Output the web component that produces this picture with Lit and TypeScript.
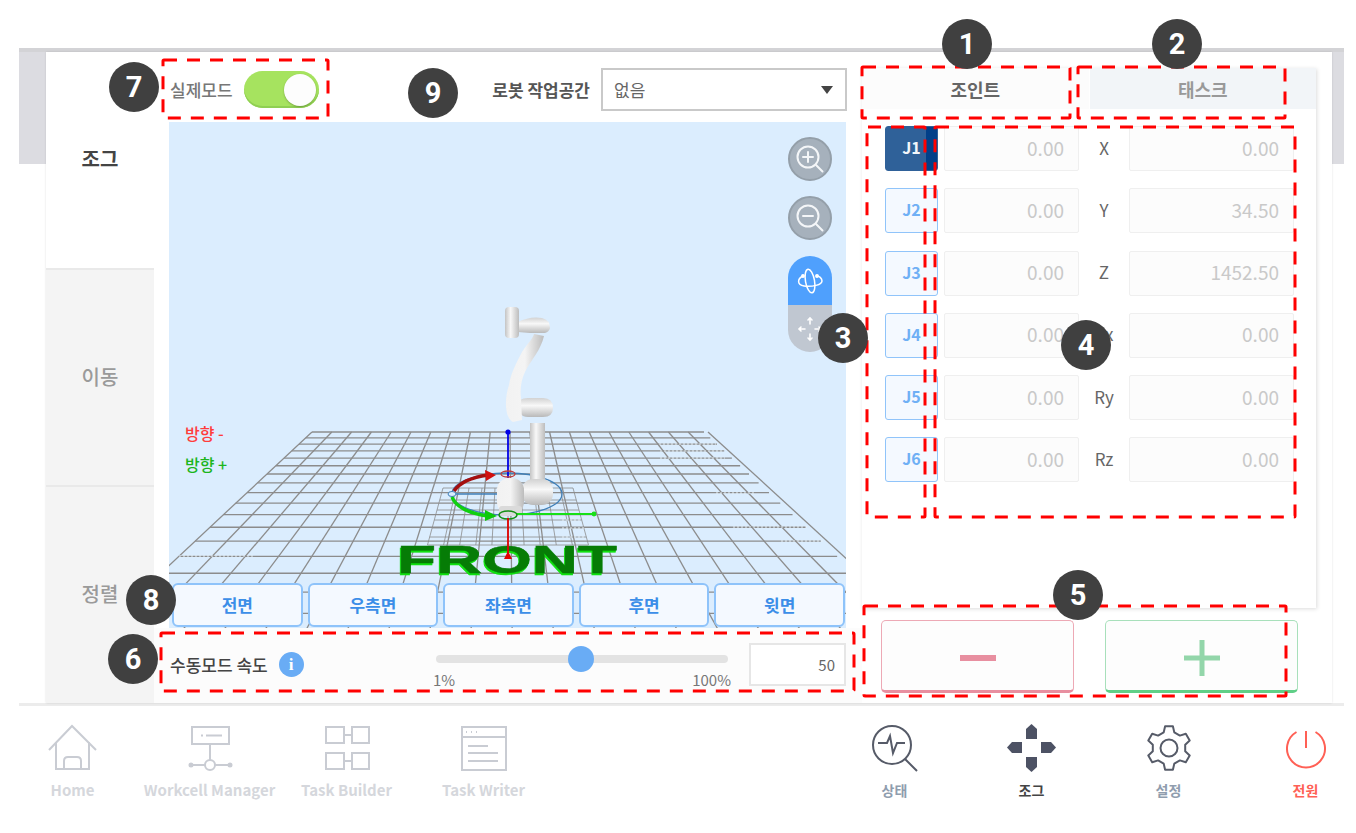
import { LitElement, html, css, svg } from "lit";
import { customElement } from "lit/decorators.js";

const KR = `"Noto Sans CJK KR", "Noto Sans", sans-serif`;

const badges = [
  { n: 1, x: 967, y: 44 }, { n: 2, x: 1177, y: 44 }, { n: 3, x: 843, y: 338 },
  { n: 4, x: 1086, y: 345 }, { n: 5, x: 1078, y: 595 }, { n: 6, x: 133, y: 659 },
  { n: 7, x: 134, y: 87 }, { n: 8, x: 151, y: 600 }, { n: 9, x: 433, y: 93 },
];
const boxes = [
  [163, 60, 165, 58], [862, 67, 208, 51], [1078, 67, 207, 51], [867, 127, 58, 390],
  [935, 127, 360, 390], [864, 606, 422, 90], [161, 633, 693, 58],
];
const joints = [
  { j: "J1", a: "0.00", l: "X", b: "0.00" }, { j: "J2", a: "0.00", l: "Y", b: "34.50" },
  { j: "J3", a: "0.00", l: "Z", b: "1452.50" }, { j: "J4", a: "0.00", l: "Rx", b: "0.00" },
  { j: "J5", a: "0.00", l: "Ry", b: "0.00" }, { j: "J6", a: "0.00", l: "Rz", b: "0.00" },
];
const views = ["전면", "우측면", "좌측면", "후면", "윗면"];

function gridLines() {
  const out: any[] = [];
  const vy = 249;
  const slope = 196 / 183;
  for (let i = 0; i < 19; i++) {
    const y = vy + 1 / (0.005464 - 0.00017 * i);
    const w = (y - vy) * slope;
    out.push(svg`<line x1=${508 - w} y1=${y} x2=${508 + w} y2=${y}></line>`);
  }
  for (let j = 0; j <= 20; j++) {
    const xb = 312 + 19.8 * j;
    const t = (680 - vy) / 183;
    out.push(svg`<line x1=${xb} y1="432" x2=${508 + (xb - 508) * t} y2="680"></line>`);
  }
  return out;
}

function innerLines() {
  const out: any[] = [];
  const vy = 249;
  const at = (x: number, y: number) => 508 + ((x - 508) * (y - vy)) / (488 - vy);
  for (const y of [488, 500, 510, 520, 528, 537, 545]) {
    out.push(svg`<line x1=${at(443, y)} y1=${y} x2=${at(573, y)} y2=${y}></line>`);
  }
  for (let k = 0; k <= 10; k++) {
    const x = 443 + (130 * k) / 10;
    out.push(svg`<line x1=${x} y1="488" x2=${at(x, 545)} y2="545"></line>`);
  }
  return out;
}

function gearPath() {
  const cx = 1168, cy = 748, n = 6;
  const pts: string[] = [];
  for (let i = 0; i < n; i++) {
    const a = (i * Math.PI * 2) / n - Math.PI / 2;
    const s = Math.PI / n;
    const p = (r: number, d: number) =>
      `${(cx + r * Math.cos(a + d)).toFixed(1)} ${(cy + r * Math.sin(a + d)).toFixed(1)}`;
    pts.push(p(16.5, -s * 0.62), p(22, -s * 0.34), p(22, s * 0.34), p(16.5, s * 0.62));
  }
  return "M" + pts.join("L") + "Z";
}

@customElement("app-root")
export class AppRoot extends LitElement {
  static styles = css`
    :host { display: block; font-family: ${css([KR] as any)}; }
    .stage { position: relative; width: 1356px; height: 833px; overflow: hidden; background: #fff; }
    .backdrop { position: absolute; left: 19px; top: 48px; width: 1325px; height: 116px; background: #dcdce1; border-top: 4px solid #d3d3d6; box-sizing: border-box; }
    .main { position: relative; margin: 52px 0 0 46px; width: 1286px; height: 651px; display: flex; background: #fff; box-shadow: 0 0 2px rgba(0,0,0,.12); }
    .side { width: 108px; display: flex; flex-direction: column; flex: none; }
    .tab { flex: 1; display: flex; align-items: center; justify-content: center; padding-bottom: 3px; font-size: 20px; color: #9a9a9a; background: #f4f4f4; border-top: 2px solid #e9e9e9; font-weight: 500; }
    .tab.on { background: #fff; color: #444; font-weight: 700; border-top: 0; }
    .center { width: 708px; flex: none; display: flex; flex-direction: column; }
    .top { height: 70px; box-sizing: border-box; padding: 16px 15px 0 16px; display: flex; justify-content: space-between; align-items: flex-start; }
    .mode { display: flex; align-items: center; gap: 11px; margin-top: 3px; font-size: 17px; font-weight: 500; color: #777; }
    .toggle { width: 75px; height: 37px; border-radius: 19px; background: #a6e35f; display: flex; justify-content: flex-end; align-items: center; padding-right: 3px; box-sizing: border-box; box-shadow: inset 0 -2px 0 #8fcf52; }
    .knob { width: 32px; height: 32px; border-radius: 50%; background: #fdfdfd; box-shadow: 0 1px 2px rgba(0,0,0,.25); }
    .work { display: flex; align-items: center; gap: 11px; font-size: 17px; font-weight: 700; color: #555; }
    .select { width: 246px; height: 43px; box-sizing: border-box; border: 2px solid #c9c9c9; padding: 0 12px 0 11px; display: flex; align-items: center; justify-content: space-between; font-size: 17px; font-weight: 400; color: #666; }
    .tri { width: 0; height: 0; border-left: 6px solid transparent; border-right: 6px solid transparent; border-top: 8px solid #444; }
    .scene { position: relative; margin-left: 15px; width: 677px; height: 506px; background: #dbedfe; overflow: hidden; display: flex; flex-direction: column; justify-content: flex-end; box-sizing: border-box; padding-bottom: 1px; }
    .scene > svg.world { position: absolute; inset: 0; width: 677px; height: 506px; }
    .grid line { stroke: #8c8c8c; stroke-width: 1.3; }
    .inner line { stroke: #8c8c8c; stroke-width: .8; }
    .dots line { stroke: #e8f1f8; stroke-width: 1.2; stroke-dasharray: 2 2; }
    .front { font-family: "Liberation Sans", sans-serif; font-weight: 700; font-size: 38px; fill: #067c06; stroke: #067c06; stroke-width: .5; filter: drop-shadow(-1px 2px 0 #10e010); }
    .dir { position: absolute; left: 16px; font-size: 16px; font-weight: 500; line-height: 20px; }
    .dir.neg { top: 301px; color: #ff3c3c; }
    .dir.pos { top: 332px; color: #1db51d; }
    .tools { position: absolute; left: 619px; top: 15px; width: 44px; display: flex; flex-direction: column; gap: 15px; }
    .round { width: 44px; height: 44px; box-sizing: border-box; border-radius: 50%; background: #a6b1bc; border: 2px solid #949fa9; display: flex; align-items: center; justify-content: center; }
    .pill { width: 44px; height: 96px; border-radius: 22px; overflow: hidden; display: flex; flex-direction: column; margin-top: 1px; }
    .pill div { display: flex; justify-content: center; align-items: center; }
    .pill .a { height: 49px; background: #4fa0fd; }
    .pill .b { height: 47px; background: #c0c7d1; }
    .views { position: relative; display: flex; gap: 5px; padding: 0 1px 0 3px; }
    .views button { flex: 1; height: 44px; margin: 0; padding: 0 0 2px; box-sizing: border-box; border: 2px solid #8ec3fa; border-radius: 6px; background: #f4f9ff; color: #3b8ee8; font: 700 17px ${css([KR] as any)}; }
    .speed { flex: 1; background: #fcfcfc; padding: 0 16px; display: flex; align-items: flex-start; }
    .speed .lbl { margin-top: 24px; font-size: 17px; font-weight: 500; color: #444; display: flex; align-items: center; gap: 11px; }
    .info { width: 25px; height: 25px; border-radius: 50%; background: #69acf5; color: #fff; display: flex; align-items: center; justify-content: center; font: 700 17px "Liberation Serif", serif; }
    .slider { margin-left: auto; margin-top: 27px; width: 298px; }
    .track { position: relative; height: 8px; margin: 0 3px; border-radius: 4px; background: #e3e3e3; }
    .thumb { position: absolute; left: 132px; top: -9px; width: 26px; height: 26px; border-radius: 50%; background: #69acf5; }
    .ends { display: flex; justify-content: space-between; margin-top: 9px; font-size: 15px; color: #777; line-height: 16px; }
    .num { margin: 15px 0 0 18px; width: 97px; height: 43px; box-sizing: border-box; border: 2px solid #e6e6e6; background: #fff; display: flex; align-items: center; justify-content: flex-end; padding-right: 9px; font-size: 15px; color: #666; }
    .right { width: 470px; flex: none; padding-top: 16px; box-sizing: border-box; }
    .panel { width: 454px; height: 540px; box-sizing: border-box; background: #fff; box-shadow: 1px 1px 4px rgba(0,0,0,.14); }
    .ptabs { display: flex; height: 41px; }
    .ptab { flex: 1; display: flex; align-items: center; justify-content: center; font-size: 18px; font-weight: 700; color: #666; background: #fcfcfc; }
    .ptab.off { background: #f2f5f8; color: #999; margin-left: 1px; }
    .rows { padding: 17px 22px 0 23px; display: flex; flex-direction: column; gap: 17.3px; }
    .row { display: grid; grid-template-columns: 53px 141px 50px 1fr; height: 45px; }
    .row .jb { box-sizing: border-box; border: 1.5px solid #90c4fa; border-radius: 3px; background: #f4f9ff; color: #6fb0f5; font-size: 16px; font-weight: 700; display: flex; align-items: center; justify-content: center; padding-bottom: 3px; }
    .row .jb.on { background: linear-gradient(90deg, #2f6199 40px, #023f88 40px); border-color: #2f6199; color: #f2f6fb; }
    .field { box-sizing: border-box; border: 1.5px solid #efefef; border-radius: 2px; background: #fcfcfc; display: flex; align-items: center; justify-content: flex-end; padding: 0 14px 3px 0; font-size: 19px; color: #c9c9c9; }
    .field.a { margin-left: 6px; }
    .row .name { display: flex; align-items: center; justify-content: center; font-size: 17px; color: #666; padding-bottom: 3px; }
    .acts { display: flex; gap: 31px; margin: 12px 0 0 19px; }
    .act { width: 193px; height: 73px; box-sizing: border-box; border-radius: 5px; background: #fdfdfd; display: flex; align-items: center; justify-content: center; padding-top: 4px; }
    .act.m { border: 1.5px solid #eda9b5; border-bottom: 3px solid #e88fa0; }
    .act.p { border: 1.5px solid #a8e0bb; border-bottom: 3px solid #5fcf87; }
    .fline { margin: 0 12px 0 19px; height: 3px; background: #ececec; }
    .foot { height: 127px; display: flex; padding-left: 4px; }
    .fgroup { display: flex; }
    .fgroup.r { margin-left: auto; margin-right: -18px; }
    .item { width: 137px; display: flex; flex-direction: column; align-items: center; padding-top: 17px; box-sizing: border-box; font-size: 15px; font-weight: 700; color: #d5d7dc; white-space: nowrap; }
    .item svg { width: 50px; height: 50px; display: block; margin-bottom: 7px; }
    .item span { line-height: 20px; }
    .item.s { font-size: 14px; color: #8f9dae; }
    .item.dark { color: #444; }
    .item.pw { color: #ff6055; }
    .ic { fill: none; stroke: #c9ccd3; stroke-width: 2; }
    .ic2 { fill: none; stroke: #565b68; stroke-width: 2; }
    .badge { position: absolute; width: 50px; height: 50px; border-radius: 50%; background: #404040; color: #fff; display: flex; align-items: center; justify-content: center; font: 700 29px "Liberation Sans Narrow", Roboto, sans-serif; }
    .marks { position: absolute; inset: 0; width: 1356px; height: 833px; pointer-events: none; }
    .marks rect { fill: none; stroke: #f00; stroke-width: 3; stroke-dasharray: 13 10; }
  `;

  world() {
    return svg`
      <defs>
        <linearGradient id="tube" x1="0" x2="1" y1="0" y2="0">
          <stop offset="0" stop-color="#c4c4c4"/><stop offset=".4" stop-color="#f8f8f8"/><stop offset="1" stop-color="#bdbdbd"/>
        </linearGradient>
        <linearGradient id="cap" x1="0" x2="0" y1="0" y2="1">
          <stop offset="0" stop-color="#d2d2d2"/><stop offset=".4" stop-color="#f8f8f8"/><stop offset="1" stop-color="#b9b9b9"/>
        </linearGradient>
        <linearGradient id="soft" x1="0" x2="1" y1="0" y2="0">
          <stop offset="0" stop-color="#f2f2f2"/><stop offset=".5" stop-color="#f4f4f4"/><stop offset="1" stop-color="#bcbcbc"/>
        </linearGradient>
        <filter id="b"><feGaussianBlur stdDeviation=".6"/></filter>
      </defs>
      <g class="grid">${gridLines()}</g>
      <g class="inner">${innerLines()}</g>
      <g class="dots">
        <line x1="659" y1="444" x2="716" y2="444"></line><line x1="660" y1="451" x2="722" y2="451"></line>
        <line x1="660" y1="458" x2="725" y2="458"></line><line x1="716" y1="493" x2="755" y2="493"></line>
        <line x1="733" y1="527" x2="807" y2="527"></line><line x1="781" y1="541" x2="825" y2="541"></line>
        <line x1="179" y1="556" x2="253" y2="556"></line><line x1="562" y1="520" x2="582" y2="520"></line>
        <line x1="562" y1="528" x2="585" y2="528"></line><line x1="562" y1="537" x2="585" y2="537"></line>
      </g>
      <text class="front" x="397" y="573" textLength="220" lengthAdjust="spacingAndGlyphs">FRONT</text>
      <ellipse cx="507" cy="494" rx="55" ry="21" fill="none" stroke="#3f7fb8" stroke-width="1.3"></ellipse>
      <line x1="452" y1="494" x2="497" y2="494" stroke="#3f7fb8" stroke-width="1.3"></line>
      <ellipse cx="452" cy="494" rx="4" ry="2.500" fill="#dbedfe" stroke="#3f7fb8"></ellipse>
      <line x1="508" y1="433" x2="508" y2="478" stroke="#0000e6" stroke-width="1.8"></line>
      <circle cx="508" cy="432" r="2.600" fill="#0000e6"></circle>
      <ellipse cx="508" cy="474" rx="7" ry="3" fill="none" stroke="#c23a3a" stroke-width="1.300"></ellipse>
      <path d="M454 491 C460 482 474 477 488 475" fill="none" stroke="#a50f0f" stroke-width="3.500"></path>
      <path d="M485 470 L496 475 L486 481Z" fill="#d01010"></path>
      <path d="M452 497 C456 508 472 514 488 516" fill="none" stroke="#10d010" stroke-width="3.500"></path>
      <path d="M485 510 L497 516 L485 521Z" fill="#0cc80c"></path>
      <g filter="url(#b)">
        <rect x="530" y="423" width="15" height="60" fill="url(#tube)"></rect>
        <path d="M518 405 Q518 398 528 398 H543 Q553 398 553 408 Q553 417 543 417 H528 Q518 417 518 405Z" fill="url(#cap)"></path>
        <path d="M534 334 L544 336 C541 350 531 360 525 372 C521 380 520 390 521 398 L522 420 L513 422 C505 418 504 400 509 385 C511 372 517 362 522 352 C527 344 532 340 534 334Z" fill="url(#soft)"></path>
        <path d="M518 322 Q530 316 542 318 Q550 320 550 328 Q549 332 545 333 L530 333 L518 332Z" fill="url(#cap)"></path>
        <rect x="505" y="307" width="14" height="31" rx="4" fill="url(#tube)"></rect>
        <rect x="522" y="479" width="31" height="26" rx="11" fill="url(#cap)"></rect>
        <rect x="497" y="478" width="27" height="36" rx="12" fill="url(#soft)"></rect>
        <rect x="499" y="506" width="23" height="10" rx="3" fill="#dadada"></rect>
      </g>
      <line x1="517" y1="514" x2="593" y2="514" stroke="#18e018" stroke-width="1.800"></line>
      <circle cx="594" cy="514" r="2.400" fill="#18e018"></circle>
      <ellipse cx="508" cy="515" rx="9" ry="4" fill="none" stroke="#149014" stroke-width="1.500"></ellipse>
      <line x1="508" y1="518" x2="508" y2="556" stroke="#e00000" stroke-width="1.800"></line>
      <path d="M504 559 L508 551 L512 559Z" fill="#e00000"></path>
    `;
  }

  render() {
    return html`<div class="stage">
      <div class="backdrop"></div>
      <div class="main">
        <div class="side">
          <div class="tab on">조그</div><div class="tab">이동</div><div class="tab">정렬</div>
        </div>
        <div class="center">
          <div class="top">
            <div class="mode">실제모드<div class="toggle"><div class="knob"></div></div></div>
            <div class="work">로봇 작업공간<div class="select">없음<span class="tri"></span></div></div>
          </div>
          <div class="scene">
            <svg class="world" viewBox="169 122 677 506">${this.world()}</svg>
            <div class="dir neg">방향 -</div><div class="dir pos">방향 +</div>
            <div class="tools">
              <div class="round"><svg width="34" height="34" viewBox="0 0 34 34" fill="none" stroke="#f4f6f8" stroke-width="2" stroke-linecap="round"><circle cx="15" cy="15" r="10.500"/><path d="M23 23l6.500 6.500M10 15h10M15 10v10"/></svg></div>
              <div class="round"><svg width="34" height="34" viewBox="0 0 34 34" fill="none" stroke="#f4f6f8" stroke-width="2" stroke-linecap="round"><circle cx="15" cy="15" r="10.500"/><path d="M23 23l6.500 6.500M10 15h10"/></svg></div>
              <div class="pill">
                <div class="a"><svg width="30" height="30" viewBox="0 0 30 30" fill="none" stroke="#fff" stroke-width="1.500"><ellipse cx="15" cy="15" rx="4.500" ry="12" transform="rotate(-10 15 15)"/><path d="M8 10C2 13 2 19 9 20c8 1 18-1 18-5 0-3-3-5-5-5"/><circle cx="8" cy="10" r="1.200" fill="#fff"/><circle cx="22" cy="10" r="1.200" fill="#fff"/></svg></div>
                <div class="b"><svg width="30" height="30" viewBox="0 0 30 30" fill="none" stroke="#fff" stroke-width="1.600" stroke-linecap="round"><path d="M15 4v6M13 6l2-2 2 2M15 20v6M13 24l2 2 2-2M4 15h6M6 13l-2 2 2 2M20 15h6M24 13l2 2-2 2"/></svg></div>
              </div>
            </div>
            <div class="views">${views.map((v) => html`<button>${v}</button>`)}</div>
          </div>
          <div class="speed">
            <div class="lbl">수동모드 속도<span class="info">i</span></div>
            <div class="slider">
              <div class="track"><div class="thumb"></div></div>
              <div class="ends"><span>1%</span><span>100%</span></div>
            </div>
            <div class="num">50</div>
          </div>
        </div>
        <div class="right">
          <div class="panel">
            <div class="ptabs"><div class="ptab">조인트</div><div class="ptab off">태스크</div></div>
            <div class="rows">
              ${joints.map((r, i) => html`<div class="row">
                <div class="jb ${i === 0 ? "on" : ""}">${r.j}</div>
                <div class="field a">${r.a}</div>
                <div class="name">${r.l}</div>
                <div class="field">${r.b}</div>
              </div>`)}
            </div>
          </div>
          <div class="acts">
            <div class="act m"><svg width="36" height="8" viewBox="0 0 36 8"><rect width="36" height="6" y="1" fill="#e88fa0"/></svg></div>
            <div class="act p"><svg width="36" height="36" viewBox="0 0 36 36"><path d="M15.500 0h5v15.500H36v5H20.500V36h-5V20.500H0v-5h15.500z" fill="#93d6aa"/></svg></div>
          </div>
        </div>
      </div>
      <div class="fline"></div>
      <div class="foot">
        <div class="fgroup">
          <div class="item"><svg viewBox="47 723 50 50" class="ic"><path d="M48 750L71 726L95 750M55 742V769H88V742M63 769V761Q63 757 67 757H76Q80 757 80 761V769"/></svg><span>Home</span></div>
          <div class="item"><svg viewBox="184 723 50 50" class="ic"><rect x="191" y="727" width="37" height="17"/><path d="M200 735.500h2M205 735.500h16M209 744v16M191 765h13M214 765h14"/><circle cx="209" cy="765" r="5"/><circle cx="190" cy="765" r="1.500" fill="#c9ccd3"/><circle cx="229" cy="765" r="1.500" fill="#c9ccd3"/></svg><span>Workcell Manager</span></div>
          <div class="item"><svg viewBox="321 723 50 50" class="ic"><rect x="325" y="727" width="18" height="16"/><rect x="351" y="727" width="17" height="16"/><rect x="325" y="753" width="18" height="16"/><rect x="351" y="753" width="17" height="16"/><path d="M343 735h8M343 761h8"/></svg><span>Task Builder</span></div>
          <div class="item"><svg viewBox="458 723 50 50" class="ic"><rect x="461" y="727" width="44" height="43"/><path d="M461 737h44M467 746h20M467 753h30M467 761h30M465 732h1M470 732h1M475 732h1"/></svg><span>Task Writer</span></div>
        </div>
        <div class="fgroup r">
          <div class="item s"><svg viewBox="870 723 50 50" class="ic2"><circle cx="892" cy="745" r="19"/><path d="M905 759L917 771M878 743h9l3-7 3 17 4-10h8"/></svg><span>상태</span></div>
          <div class="item s dark"><svg viewBox="1007 723 50 50"><g fill="#4d5264"><path d="M1026 739V729l5.500-5 5.500 5v10z"/><path d="M1026 757v10l5.500 5 5.500-5v-10z"/><path d="M1022 742h-10l-5 5.500 5 5.500h10z"/><path d="M1041 742h10l5 5.500-5 5.500h-10z"/></g></svg><span>조그</span></div>
          <div class="item s"><svg viewBox="1143 723 50 50" class="ic2"><path d=${gearPath()} stroke-linejoin="round"/><circle cx="1168" cy="748" r="8.500"/></svg><span>설정</span></div>
          <div class="item s pw"><svg viewBox="1281 723 50 50" fill="none" stroke="#ff6055" stroke-width="2"><path d="M1296.500 732a19 19 0 1 0 19 0M1306 731v17"/></svg><span>전원</span></div>
        </div>
      </div>
      <svg class="marks" viewBox="0 0 1356 833">${boxes.map((b) => svg`<rect x=${b[0]} y=${b[1]} width=${b[2]} height=${b[3]} rx="1"></rect>`)}</svg>
      ${badges.map((b) => html`<div class="badge" style="left:${b.x - 25}px;top:${b.y - 25}px">${b.n}</div>`)}
    </div>`;
  }
}
